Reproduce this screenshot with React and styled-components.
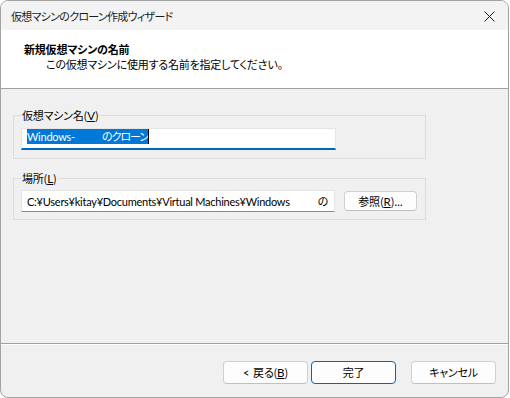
import React from "react";
import styled, { createGlobalStyle } from "styled-components";

const Global = createGlobalStyle`
  html, body { margin: 0; padding: 0; background: #ffffff; }
  body {
    font-family: "Lato", "Noto Sans CJK JP", sans-serif;
    font-size: 12px;
    color: #000;
  }
  * { box-sizing: border-box; }
`;

const jp = `"Noto Sans CJK JP", sans-serif`;
const latin = `"Lato", "Noto Sans CJK JP", sans-serif`;

const Window = styled.div`
  width: 509px;
  height: 398px;
  border: 1px solid #a3a3a3;
  border-radius: 8px;
  overflow: hidden;
  display: flex;
  flex-direction: column;
  background: #f0f0f0;
`;

const TitleBar = styled.div`
  height: 29px;
  flex: none;
  display: flex;
  align-items: center;
  justify-content: space-between;
  background: #f3f3f3;
  padding: 0 7px 0 10px;
`;

const TitleText = styled.span`
  font-family: ${jp};
  font-feature-settings: "palt";
  font-size: 11px;
  letter-spacing: -0.7px;
  line-height: 16px;
  color: #1b1b1b;
  margin-top: 1px;
`;

const CloseButton = styled.button`
  border: 0;
  background: transparent;
  width: 24px;
  height: 24px;
  padding: 0;
  display: flex;
  align-items: center;
  justify-content: center;
  margin-top: 1px;
`;

const Header = styled.div`
  height: 59px;
  flex: none;
  background: #ffffff;
  border-bottom: 1px solid #a0a0a0;
  padding: 12px 0 0 23px;
  font-family: ${jp};
  font-feature-settings: "palt";
  letter-spacing: -0.2px;
`;

const HeaderTitle = styled.div`
  font-weight: 700;
  font-size: 11px;
  line-height: 15px;
`;

const HeaderSub = styled.div`
  font-size: 11px;
  line-height: 15px;
  padding-left: 22px;
`;

const Body = styled.div`
  flex: 1;
  padding: 18px 0 0 12px;
`;

const Group = styled.fieldset`
  width: 413px;
  margin: ${(p) => p.$top}px 0 0 0;
  padding: 0 8px ${(p) => p.$bottom}px 7px;
  border: 1px solid #dcdcdc;
  min-width: 0;
`;

const Legend = styled.legend`
  padding: 0 1px;
  font-family: ${jp};
  font-feature-settings: "palt";
  letter-spacing: -0.2px;
  font-size: 11px;
  line-height: 16px;
  color: #000;
`;

const Key = styled.span`
  text-decoration: underline;
  font-family: ${latin};
  font-size: 11.5px;
  letter-spacing: 0;
`;

const Row = styled.div`
  display: flex;
  align-items: center;
  gap: 9px;
  margin-top: ${(p) => p.$top}px;
`;

const TextBox = styled.div`
  width: ${(p) => p.$w}px;
  height: 22px;
  background: #ffffff;
  border: 1px solid #e5e5e5;
  border-bottom: ${(p) => (p.$focused ? "2px solid #0067c0" : "1px solid #8a8a8a")};
  padding: 0 0 0 5px;
  display: flex;
  align-items: ${(p) => (p.$focused ? "flex-start" : "center")};
  font-family: ${latin};
  font-size: 11px;
  letter-spacing: -0.25px;
  white-space: pre;
  overflow: hidden;
`;

const Selection = styled.span`
  display: inline-flex;
  align-items: center;
  background: #0078d7;
  color: #ffffff;
  height: 15px;
  line-height: 15px;
`;

const Blank = styled.span`
  display: inline-block;
  width: ${(p) => p.$w}px;
`;

const KanaRun = styled.span`
  font-family: ${jp};
  font-feature-settings: "palt";
  font-size: 11px;
  letter-spacing: -1px;
`;

const Caret = styled.span`
  display: inline-block;
  width: 1px;
  height: 15px;
  background: #000;
`;

const Value = styled.span`
  display: inline-flex;
  align-items: center;
  line-height: 15px;
`;

const Button = styled.button`
  width: ${(p) => p.$w}px;
  height: ${(p) => p.$h}px;
  background: #fdfdfd;
  border: 1px solid ${(p) => (p.$primary ? "#0067c0" : "#d0d0d0")};
  border-bottom-color: ${(p) => (p.$primary ? "#0067c0" : "#c0c0c0")};
  border-radius: 4px;
  padding: 0;
  font-family: ${jp};
  font-feature-settings: "palt";
  letter-spacing: -0.2px;
  font-size: 11px;
  line-height: 15px;
  color: #000;
  flex: none;
  white-space: pre;
`;

const Arrow = styled.span`
  font-family: ${latin};
  margin-right: 4px;
`;

const Footer = styled.div`
  flex: none;
  border-top: 1px solid #a0a0a0;
  box-shadow: inset 0 1px 0 #ffffff;
  padding: 17px 12px 13px 0;
  display: flex;
  justify-content: flex-end;
  align-items: center;
`;

const Gap = styled.div`
  width: ${(p) => p.$w}px;
  flex: none;
`;

export default function App() {
  return (
    <>
      <Global />
      <Window>
        <TitleBar>
          <TitleText>仮想マシンのクローン作成ウィザード</TitleText>
          <CloseButton aria-label="閉じる">
            <svg width="11" height="11" viewBox="0 0 11 11">
              <path d="M0.5 0.5 L10.5 10.5 M10.5 0.5 L0.5 10.5" stroke="#1b1b1b" strokeWidth="1" fill="none" />
            </svg>
          </CloseButton>
        </TitleBar>
        <Header>
          <HeaderTitle>新規仮想マシンの名前</HeaderTitle>
          <HeaderSub>この仮想マシンに使用する名前を指定してください。</HeaderSub>
        </Header>
        <Body>
          <Group $top={0} $bottom={8}>
            <Legend>
              仮想マシン名(<Key>V</Key>)
            </Legend>
            <Row $top={4}>
              <TextBox $w={315} $focused>
                <Selection>
                  Windows-
                  <Blank $w={27} />
                  <KanaRun>のクローン</KanaRun>
                </Selection>
                <Caret />
              </TextBox>
            </Row>
          </Group>
          <Group $top={11} $bottom={7}>
            <Legend>
              場所(<Key>L</Key>)
            </Legend>
            <Row $top={3}>
              <TextBox $w={314}>
                <Value>
                  C:¥Users¥kitay¥Documents¥Virtual Machines¥Windows
                  <Blank $w={28} />
                  <KanaRun>の</KanaRun>
                </Value>
              </TextBox>
              <Button $w={73} $h={20}>
                参照(<Key>R</Key>)...
              </Button>
            </Row>
          </Group>
        </Body>
        <Footer>
          <Button $w={85} $h={23}>
            <Arrow>&lt;</Arrow>戻る(<Key>B</Key>)
          </Button>
          <Gap $w={3} />
          <Button $w={85} $h={23} $primary>
            完了
          </Button>
          <Gap $w={15} />
          <Button $w={85} $h={23}>
            キャンセル
          </Button>
        </Footer>
      </Window>
    </>
  );
}
